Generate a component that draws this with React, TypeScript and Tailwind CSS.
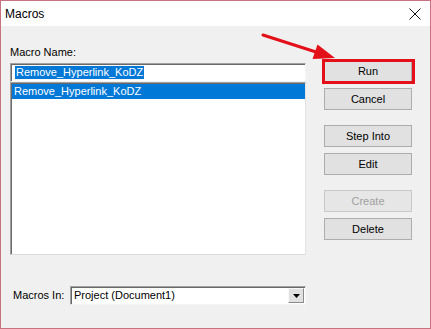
import React from "react";

const Btn = ({ label, disabled }: { label: string; disabled?: boolean }) => (
  <div
    className={
      "w-[88px] h-[22px] flex items-center justify-center border " +
      (disabled
        ? "bg-[#e6e6e6] border-[#c8c8c8] text-[#a0a0a0]"
        : "bg-[#e1e1e1] border-[#adadad] text-black")
    }
  >
    {label}
  </div>
);

export default function App() {
  return (
    <div className="w-[431px] h-[329px] bg-[#f0f0f0] border border-[#c9727f] relative flex flex-col text-[11px] leading-[13px] text-black font-['Liberation_Sans',Arial,sans-serif] overflow-hidden">
      {/* Title bar */}
      <div className="h-[25px] bg-white flex items-center justify-between pl-[4px] pr-[9px] shrink-0">
        <span className="text-[12px] leading-[14px] text-black">Macros</span>
        <svg width="12" height="12" viewBox="0 0 12 12" className="mt-[1px]">
          <path d="M0.5 0.5 L11.5 11.5 M11.5 0.5 L0.5 11.5" stroke="#111" strokeWidth="1" fill="none" />
        </svg>
      </div>

      {/* Body */}
      <div className="flex flex-1">
        {/* Left column */}
        <div className="w-[305px] pl-[9px] pt-[20px] flex flex-col shrink-0">
          <div className="h-[13px]">Macro Name:</div>
          <div className="mt-[4px] h-[19px] w-[296px] bg-white border border-t-[#a0a0a0] border-l-[#a0a0a0] border-r-[#f5f5f5] border-b-[#f5f5f5] shadow-[inset_1px_1px_0_#696969] flex items-center pl-[4px]">
            <span className="bg-[#0078d7] text-white leading-[13px] px-[1px]">Remove_Hyperlink_KoDZ</span>
          </div>
          <div className="h-[173px] w-[296px] bg-white border border-t-[#a0a0a0] border-l-[#a0a0a0] border-r-[#e3e3e3] border-b-[#dcdcdc] shadow-[inset_1px_1px_0_#696969] pl-[1px] pt-[1px] pr-[0px]">
            <div className="h-[15px] bg-[#0078d7] text-white flex items-center pl-[2px]">Remove_Hyperlink_KoDZ</div>
          </div>
          <div className="mt-[31px] flex items-center">
            <div className="w-[60px] pl-[3px]">Macros In:</div>
            <div className="w-[236px] h-[19px] bg-white border border-t-[#a0a0a0] border-l-[#a0a0a0] border-r-[#f5f5f5] border-b-[#f5f5f5] shadow-[inset_1px_1px_0_#696969] flex items-center justify-between">
              <span className="pl-[3px]">Project (Document1)</span>
              <div className="w-[16px] h-[15px] mr-[1px] bg-[#e1e1e1] border border-t-[#f8f8f8] border-l-[#f8f8f8] border-r-[#8a8a8a] border-b-[#8a8a8a] flex items-center justify-center">
                <svg width="7" height="4" viewBox="0 0 7 4">
                  <path d="M0 0 L7 0 L3.5 4 Z" fill="#000" />
                </svg>
              </div>
            </div>
          </div>
        </div>

        {/* Right column */}
        <div className="ml-[18px] pt-[34px] flex flex-col">
          <Btn label="Run" />
          <div className="mt-[6px]">
            <Btn label="Cancel" />
          </div>
          <div className="mt-[15px]">
            <Btn label="Step Into" />
          </div>
          <div className="mt-[6px]">
            <Btn label="Edit" />
          </div>
          <div className="mt-[15px]">
            <Btn label="Create" disabled />
          </div>
          <div className="mt-[6px]">
            <Btn label="Delete" />
          </div>
        </div>
      </div>

      {/* Red annotation box */}
      <div className="absolute left-[321px] top-[58px] w-[93px] h-[25px] border-[3px] border-[#e3101a]" />

      {/* Red arrow */}
      <svg className="absolute left-0 top-0 pointer-events-none" width="431" height="329" viewBox="0 0 431 329">
        <line x1="262" y1="34" x2="315" y2="51" stroke="#e3101a" strokeWidth="3" strokeLinecap="round" />
        <polygon points="334,57 311.5,58 316.5,43.5" fill="#e3101a" />
      </svg>
    </div>
  );
}
